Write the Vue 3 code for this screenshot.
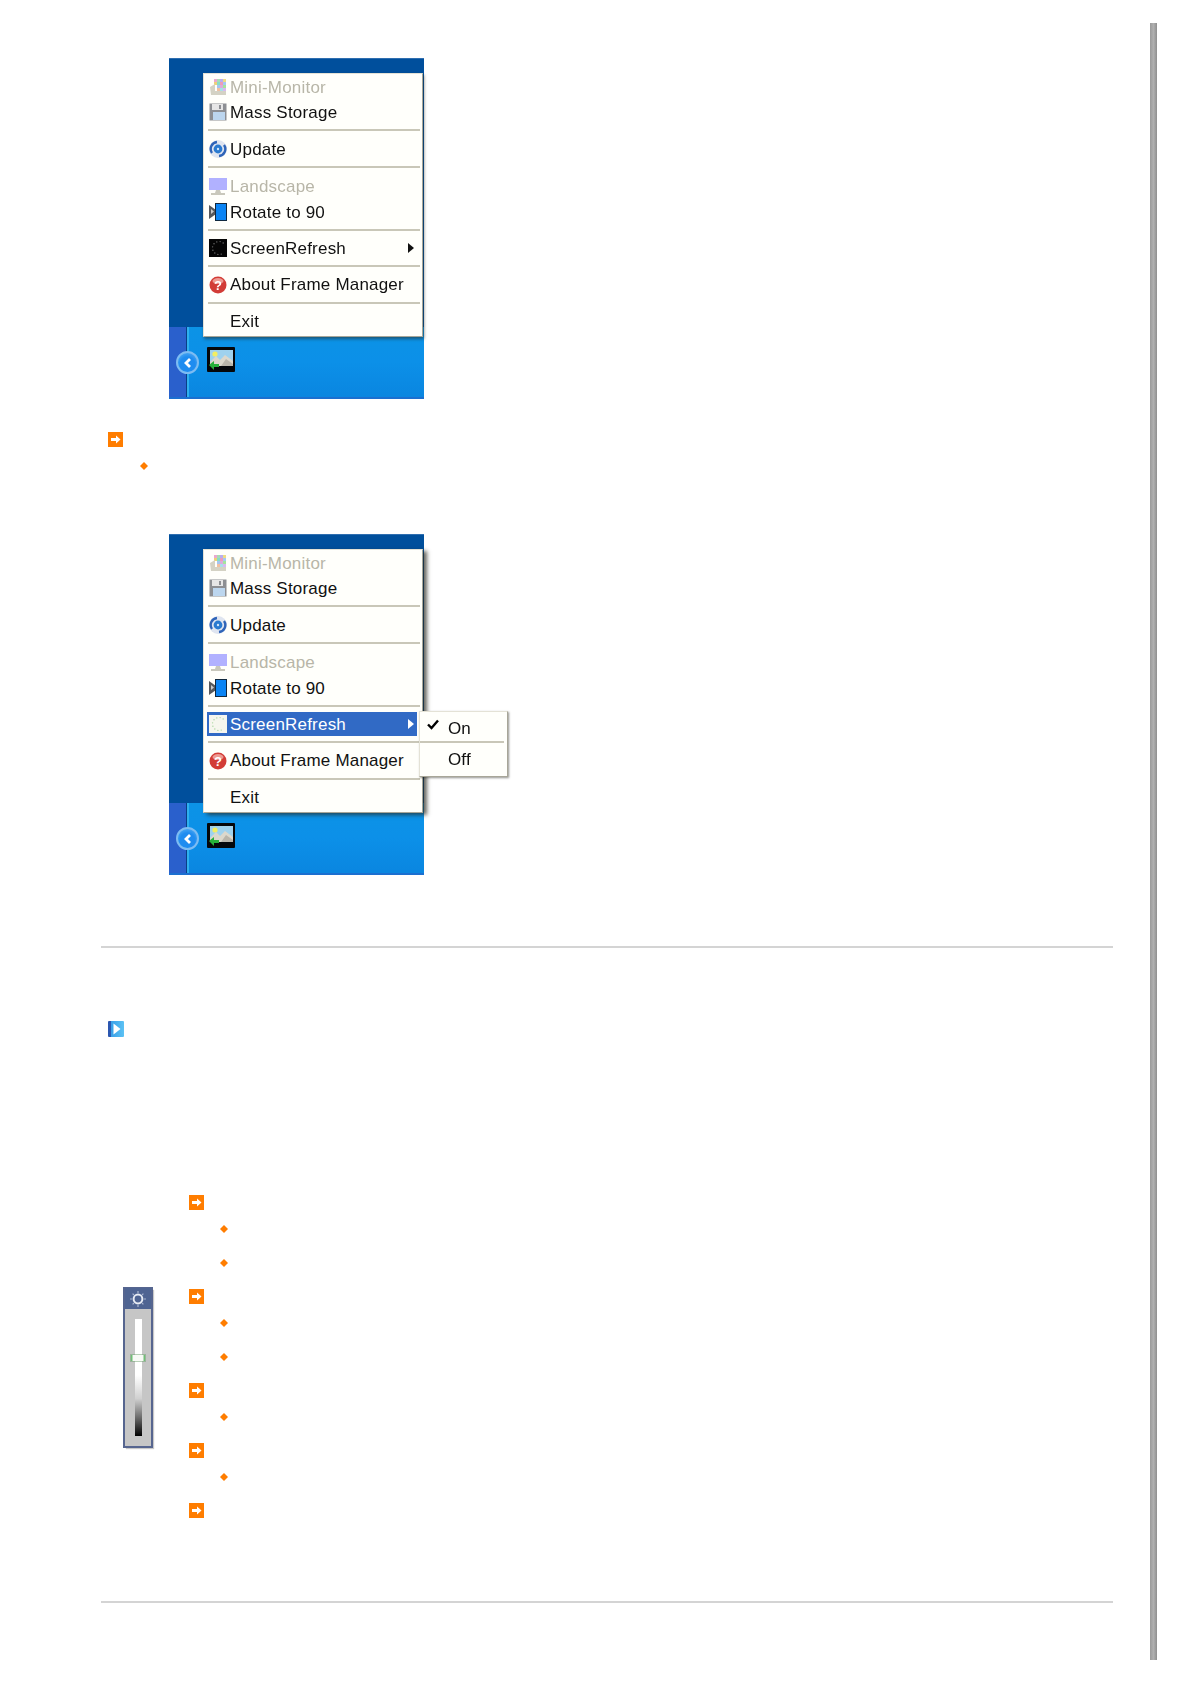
<script setup>
// two copies of the tray menu screenshot, second one has the submenu open
const shots = [{ open: false }, { open: true }]

const menu = [
  { label: 'Mini-Monitor', icon: 'mini', disabled: true },
  { label: 'Mass Storage', icon: 'floppy', low: true },
  { sep: true },
  { label: 'Update', icon: 'update', low: true },
  { sep: true },
  { label: 'Landscape', icon: 'landscape', disabled: true, tall: true },
  { label: 'Rotate to 90', icon: 'rotate', tall: true, low: true },
  { sep: true, short: true },
  { label: 'ScreenRefresh', icon: 'refresh', sub: true, low: true },
  { sep: true },
  { label: 'About Frame Manager', icon: 'about' },
  { sep: true },
  { label: 'Exit' }
]

const tiles = [
  [5, 0, '#e9a9cf'], [8, 0, '#a8dcb4'], [11, 0, '#b9aef0'], [14, 0, '#efdc84'],
  [5, 3, '#efd07a'], [8, 3, '#86dcc8'], [11, 3, '#ee9db8'], [14, 3, '#a6c8f4'],
  [8, 6, '#a6c4f0'], [11, 6, '#dcaadc'], [14, 6, '#a4e49c'],
  [8, 9, '#f0c0a0'], [11, 9, '#a8e0e8'], [14, 9, '#d8b8f0']
]

// only the left part of the ring shows on the black icon
const dots = [70, 100, 130, 160, 190, 220, 250, 280, 310]

const rows = [
  { kind: 'head', first: true },
  { kind: 'dot', gap: 'near' },
  { kind: 'dot', gap: 'far' },
  { kind: 'head' },
  { kind: 'dot', gap: 'near' },
  { kind: 'dot', gap: 'far' },
  { kind: 'head' },
  { kind: 'dot', gap: 'near' },
  { kind: 'head' },
  { kind: 'dot', gap: 'near' },
  { kind: 'head' }
]
</script>

<template>
  <div class="page">
    <main class="content">
      <section v-for="(shot, i) in shots" :key="i" class="block" :class="{ second: shot.open }">
        <div class="shot" :class="{ open: shot.open }">
          <div class="desk"></div>
          <div class="tray">
            <div class="tray-left">
              <span class="chevron">
                <svg width="12" height="12" viewBox="0 0 12 12"><path d="M8 2 L4 6 L8 10" fill="none" stroke="#fff" stroke-width="2.8" /></svg>
              </span>
            </div>
            <svg class="tray-icon" width="28" height="25" viewBox="0 0 28 25">
              <rect width="28" height="25" rx="1" fill="#05070a" />
              <rect x="3" y="3" width="23" height="16" fill="#9fd2ee" />
              <circle cx="8" cy="7" r="2.6" fill="#f3ee62" />
              <path d="M3 19 L3 15 L9 9 L13 13 L18 8 L26 14 L26 19 Z" fill="#dcd8cc" />
              <path d="M14 19 L19 12 L26 17 V19 Z" fill="#b9b5aa" />
              <path d="M2 18 L7 14 V17 H12 V20 H7 V23 Z" fill="#27b13a" />
            </svg>
          </div>

          <div class="menu">
            <template v-for="(item, n) in menu" :key="n">
              <div v-if="item.sep" class="sep" :class="{ short: item.short }"></div>
              <div
                v-else
                class="item"
                :class="{ disabled: item.disabled, tall: item.tall, low: item.low, active: item.sub && shot.open }"
              >
                <span class="ico">
                  <svg v-if="item.icon === 'mini'" width="18" height="18" viewBox="0 0 18 18">
                    <rect v-for="(t, k) in tiles" :key="k" :x="t[0]" :y="t[1]" width="3" height="3" :fill="t[2]" />
                    <path d="M1 8 L6 5 V12 H17 V16 H2 Z" fill="#d4d2c4" />
                  </svg>
                  <svg v-else-if="item.icon === 'floppy'" width="18" height="18" viewBox="0 0 18 18">
                    <rect x="0.5" y="0.5" width="17" height="17" fill="#8d8f93" />
                    <rect x="3" y="1" width="11" height="6" fill="#e6e6e6" />
                    <rect x="10" y="2" width="2" height="4" fill="#8d8f93" />
                    <rect x="4" y="9" width="12" height="8" fill="#bcd6ee" />
                  </svg>
                  <svg v-else-if="item.icon === 'update'" width="18" height="18" viewBox="0 0 18 18">
                    <circle cx="9" cy="9" r="9" fill="#dfe5f0" />
                    <path d="M3 13 A7 7 0 0 1 8 2" fill="none" stroke="#2f64b8" stroke-width="2.4" />
                    <path d="M15 5 A7 7 0 0 1 10 16" fill="none" stroke="#2f64b8" stroke-width="2.4" />
                    <circle cx="9" cy="9" r="4.4" fill="#2a7ad0" />
                    <circle cx="9" cy="9" r="1.2" fill="#cfe6fa" />
                  </svg>
                  <svg v-else-if="item.icon === 'landscape'" width="18" height="18" viewBox="0 0 18 18">
                    <rect x="0" y="0" width="18" height="12" fill="#b1b1ff" />
                    <path d="M7 12 H11 L12 15 H6 Z" fill="#c9c8bc" />
                    <rect x="2" y="15" width="14" height="2" fill="#c9c8bc" />
                  </svg>
                  <svg v-else-if="item.icon === 'rotate'" width="18" height="18" viewBox="0 0 18 18">
                    <path d="M0 2 L7 7 V11 L0 16 Z" fill="#55585c" />
                    <path d="M2 6 L5 8.5 L2 11 Z" fill="#c9cacb" />
                    <rect x="6.5" y="0.5" width="11" height="17" fill="#0a84f4" stroke="#10283f" />
                  </svg>
                  <svg v-else-if="item.icon === 'refresh'" width="18" height="18" viewBox="0 0 18 18">
                    <rect width="18" height="18" :fill="shot.open ? '#f6f6ee' : '#050505'" />
                    <circle
                      v-for="a in dots"
                      :key="a"
                      :cx="10 + 6.5 * Math.cos((a * Math.PI) / 180)"
                      :cy="9 + 6.5 * Math.sin((a * Math.PI) / 180)"
                      r="0.7"
                      :fill="shot.open ? '#a9d6a0' : '#6f6f6f'"
                    />
                  </svg>
                  <svg v-else-if="item.icon === 'about'" width="18" height="18" viewBox="0 0 18 18">
                    <circle cx="9" cy="9" r="8.5" fill="#d23c36" />
                    <ellipse cx="9" cy="5" rx="5.5" ry="3" fill="#ee9a92" />
                    <text x="9" y="14" text-anchor="middle" class="qmark">?</text>
                  </svg>
                </span>
                <span class="label">{{ item.label }}</span>
                <span v-if="item.sub" class="caret"></span>
              </div>
            </template>
          </div>

          <div v-if="shot.open" class="submenu">
            <div class="sub-item on">
              <svg class="check" width="12" height="11" viewBox="0 0 12 11"><path d="M1 5.5 L4.5 9 L11 1.5" fill="none" stroke="#000" stroke-width="2.4" /></svg>
              <span>On</span>
            </div>
            <div class="sub-sep"></div>
            <div class="sub-item off"><span>Off</span></div>
          </div>
        </div>

        <div v-if="!shot.open" class="note">
          <svg class="go" width="15" height="15" viewBox="0 0 15 15">
            <rect width="15" height="15" fill="#ff7d00" />
            <path d="M3 6 H8 V3.5 L12.5 7.5 L8 11.5 V9 H3 Z" fill="#fff" />
          </svg>
          <svg class="dia" width="8" height="8" viewBox="0 0 8 8"><path d="M4 0 L8 4 L4 8 L0 4 Z" fill="#ff7d00" /></svg>
        </div>
      </section>

      <hr class="rule first" />

      <svg class="play" width="16" height="16" viewBox="0 0 16 16">
        <defs>
          <linearGradient id="playfill" x1="0" x2="1" y1="0" y2="0">
            <stop offset="0" stop-color="#2c57b0" />
            <stop offset="0.2" stop-color="#2c57b0" />
            <stop offset="0.21" stop-color="#3aa0e8" />
            <stop offset="1" stop-color="#5cc2f4" />
          </linearGradient>
        </defs>
        <rect width="16" height="16" rx="1" fill="url(#playfill)" />
        <path d="M5.5 2.5 L12.5 8 L5.5 13.5 Z" fill="#fff" />
      </svg>

      <div class="brightness">
        <div class="slider">
          <div class="slider-head">
            <svg width="16" height="16" viewBox="0 0 16 16">
              <circle cx="8" cy="8" r="4.4" fill="none" stroke="#e8ecf4" stroke-width="2" />
              <path d="M8 0 V2 M8 14 V16 M0 8 H2 M14 8 H16 M2.6 2.6 L4 4 M12 12 L13.4 13.4 M2.6 13.4 L4 12 M12 4 L13.4 2.6" stroke="#aab6d0" stroke-width="1.2" />
            </svg>
          </div>
          <div class="slider-body">
            <div class="track"></div>
            <div class="thumb"></div>
          </div>
        </div>

        <ul class="steps">
          <li v-for="(row, i) in rows" :key="i" :class="[row.kind, row.gap, { first: row.first }]">
            <svg v-if="row.kind === 'head'" width="15" height="15" viewBox="0 0 15 15">
              <rect width="15" height="15" fill="#ff7d00" />
              <path d="M3 6 H8 V3.5 L12.5 7.5 L8 11.5 V9 H3 Z" fill="#fff" />
            </svg>
            <svg v-else width="8" height="8" viewBox="0 0 8 8"><path d="M4 0 L8 4 L4 8 L0 4 Z" fill="#ff7d00" /></svg>
          </li>
        </ul>
      </div>

      <hr class="rule last" />
    </main>
    <div class="edge"></div>
  </div>
</template>

<style>
body {
  background: #fff;
}
</style>

<style scoped>
.page {
  display: flex;
  height: 1683px;
  overflow: hidden;
  background: #fff;
  font-family: "Liberation Sans", Arial, sans-serif;
}

.content {
  width: 1012px;
  margin-left: 101px;
  padding-top: 58px;
}

.edge {
  width: 7px;
  height: 1637px;
  margin: 23px 0 0 37px;
  background: linear-gradient(90deg, #9a9a9a, #b0b0b0 50%, #8f8f8f);
}

/* screenshot */
.second {
  margin-top: 64px;
}

.shot {
  position: relative;
  display: flex;
  flex-direction: column;
  width: 255px;
  height: 341px;
  margin-left: 68px;
  filter: blur(0.45px);
}

.desk {
  flex: 1;
  background: #004f9c;
  border-top: 1px solid #2f6eb0;
}

.tray {
  display: flex;
  height: 70px;
  background: linear-gradient(180deg, #0c93e6, #0c90e8 50%, #0a86e0);
  border-bottom: 2px solid #1b6fd0;
}

.tray-left {
  display: flex;
  align-items: flex-end;
  width: 17px;
  height: 100%;
  background: #2a60cc;
  border-right: 1px solid #0a3f86;
  box-shadow: 2px 0 0 #2fb0ee;
}

.chevron {
  display: flex;
  align-items: center;
  justify-content: center;
  width: 23px;
  height: 23px;
  margin: 0 0 23px 7px;
  flex: none;
  border-radius: 50%;
  background: radial-gradient(circle at 50% 60%, #1e8cf0 50%, #62b6f4);
  border: 2px solid #7dbcf2;
  box-sizing: border-box;
}

.tray-icon {
  margin: 20px 0 0 20px;
}

/* menu */
.menu {
  position: absolute;
  left: 34px;
  top: 15px;
  box-sizing: border-box;
  width: 220px;
  height: 264px;
  padding: 2px 3px 3px 3px;
  background: #fffffb;
  border: 1px solid #e4e2d6;
  border-right-color: #a8a698;
  border-bottom-color: #a8a698;
  box-shadow: 1px 2px 3px rgba(40, 40, 30, 0.55);
}

.open .menu {
  box-shadow: 4px 2px 4px rgba(40, 40, 30, 0.7);
}

.item {
  display: flex;
  align-items: center;
  height: 24px;
  padding-left: 2px;
  color: #111;
  font-size: 17px;
  letter-spacing: 0.2px;
  white-space: nowrap;
}

.item.low .label {
  padding-top: 2px;
}

.item.tall {
  height: 25px;
}

.item.disabled {
  color: #b8b6a8;
}

.item.active {
  margin-right: 2px;
  background: #316ac5;
  color: #fff;
}

.ico {
  display: flex;
  flex: none;
  width: 18px;
  height: 18px;
  margin-right: 3px;
}

.label {
  flex: 1;
}

.caret {
  width: 0;
  height: 0;
  margin-right: 3px;
  border-left: 6px solid currentColor;
  border-top: 5px solid transparent;
  border-bottom: 5px solid transparent;
}

.item:not(.active) .caret {
  margin-right: 5px;
}

.sep {
  height: 13px;
  background: linear-gradient(#c9c7b8, #c9c7b8) 0 5px / 100% 2px no-repeat;
  margin: 0 -1px 0 1px;
}

.sep.short {
  height: 12px;
}

.qmark {
  font-family: "Liberation Sans", Arial, sans-serif;
  font-size: 13px;
  font-weight: 700;
  fill: #fff;
}

/* submenu */
.submenu {
  position: absolute;
  left: 250px;
  top: 177px;
  box-sizing: border-box;
  width: 89px;
  height: 66px;
  background: #fffffb;
  border: 1px solid #e4e2d6;
  border-right-color: #a8a698;
  border-bottom-color: #a8a698;
  box-shadow: 1px 1px 2px rgba(40, 40, 30, 0.5);
  color: #111;
  font-size: 17px;
  letter-spacing: 0.15px;
}

.sub-item {
  position: relative;
  display: flex;
  align-items: center;
  box-sizing: border-box;
  padding-left: 28px;
}

.sub-item.on {
  height: 29px;
  padding-top: 4px;
}

.sub-item.off {
  height: 34px;
}

.check {
  position: absolute;
  left: 7px;
  top: 7px;
}

.sub-sep {
  height: 2px;
  margin-right: 3px;
  background: #c9c7b8;
}

/* markers */
.note {
  display: flex;
  flex-direction: column;
  padding: 33px 0 0 7px;
}

.dia {
  margin: 15px 0 0 32px;
}

.rule {
  height: 2px;
  margin: 0;
  border: 0;
  background: #d4d4d4;
}

.rule.first {
  margin-top: 71px;
}

.rule.last {
  margin-top: 83px;
}

.play {
  display: block;
  margin: 73px 0 0 7px;
}

.brightness {
  display: flex;
  align-items: flex-start;
  margin-top: 158px;
}

.slider {
  display: flex;
  flex-direction: column;
  flex: none;
  box-sizing: border-box;
  width: 30px;
  height: 161px;
  margin: 92px 0 0 22px;
  border: 2px solid #56658f;
  border-top-width: 1px;
  box-shadow: 2px 2px 1px -1px #c8c8c8;
  filter: blur(0.4px);
}

.slider-head {
  display: flex;
  align-items: center;
  justify-content: center;
  flex: none;
  height: 21px;
  background: #4f6492;
}

.slider-body {
  position: relative;
  flex: 1;
  display: flex;
  justify-content: center;
  background: #c6c6c6;
}

.track {
  width: 7px;
  height: 117px;
  margin-top: 10px;
  background: linear-gradient(180deg, #fff, #fff 48%, #d0d0d0 68%, #666 85%, #000);
}

.thumb {
  position: absolute;
  left: 6px;
  top: 46px;
  width: 14px;
  height: 6px;
  background: linear-gradient(90deg, #4fb058, #f8faf6 18%, #f8faf6 82%, #4fb058);
  box-shadow: 0 0 0 1px rgba(110, 160, 110, 0.5);
}

.steps {
  display: flex;
  flex-direction: column;
  margin: 0 0 0 36px;
  padding: 0;
  list-style: none;
}

.steps li {
  display: flex;
}

.head {
  height: 15px;
  margin-top: 22px;
}

.head.first {
  margin-top: 0;
}

.dot {
  height: 8px;
  padding-left: 31px;
}

.dot.near {
  margin-top: 15px;
}

.dot.far {
  margin-top: 26px;
}
</style>
